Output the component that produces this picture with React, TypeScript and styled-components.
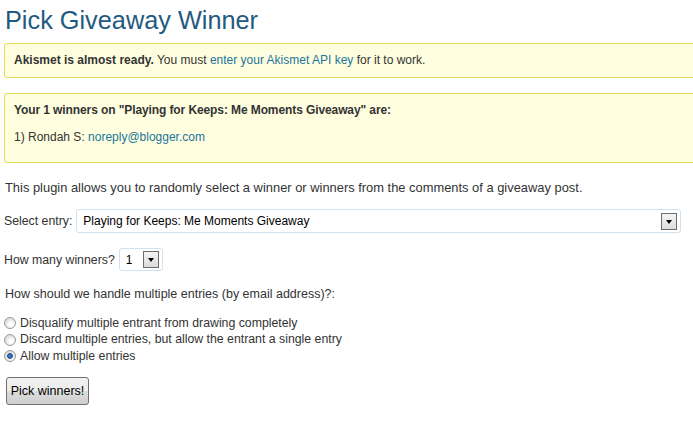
import React, { useState } from "react";
import styled, { createGlobalStyle } from "styled-components";

const GlobalStyle = createGlobalStyle`
  html, body {
    margin: 0;
    padding: 0;
    background: #fff;
  }
  body {
    font-family: "Liberation Sans", Arial, sans-serif;
    font-size: 12px;
    color: #333;
  }
`;

const methods = [
  "Disqualify multiple entrant from drawing completely",
  "Discard multiple entries, but allow the entrant a single entry",
  "Allow multiple entries",
];

const App: React.FC = () => {
  const [method, setMethod] = useState(2);

  return (
    <>
      <GlobalStyle />
      <Page>
        <Title>Pick Giveaway Winner</Title>
        <Notice>
          <NoticeLine>
            <strong>Akismet is almost ready.</strong> You must{" "}
            <Link href="#">enter your Akismet API key</Link> for it to work.
          </NoticeLine>
        </Notice>
        <Notice>
          <NoticeLine>
            <Heading>
              Your 1 winners on "Playing for Keeps: Me Moments Giveaway" are:
            </Heading>
          </NoticeLine>
          <NoticeLine>
            1) Rondah S: <Link href="#">noreply@blogger.com</Link>
          </NoticeLine>
        </Notice>
        <Intro>
          This plugin allows you to randomly select a winner or winners from
          the comments of a giveaway post.
        </Intro>
        <Field>
          Select entry:
          <Select $width={605}>
            <SelectText>Playing for Keeps: Me Moments Giveaway</SelectText>
            <Arrow />
          </Select>
        </Field>
        <Field>
          How many winners?
          <Select $width={44}>
            <SelectText>1</SelectText>
            <Arrow />
          </Select>
        </Field>
        <Question>
          How should we handle multiple entries (by email address)?:
        </Question>
        <Radios>
          {methods.map((label, index) => (
            <RadioLabel key={index}>
              <Radio
                type="radio"
                name="method"
                checked={method === index}
                onChange={() => setMethod(index)}
              />
              {label}
            </RadioLabel>
          ))}
        </Radios>
        <Button>Pick winners!</Button>
      </Page>
    </>
  );
};

export default App;

const Page = styled.div`
  padding: 0 0 0 5px;
  overflow: hidden;
`;

const Title = styled.h2`
  margin: 0;
  padding: 6px 0 0 0;
  font-size: 25.3px;
  font-weight: normal;
  line-height: 28px;
  color: #1f5a80;
`;

const Notice = styled.div`
  margin: 9px -20px 0 -1px;
  padding: 9px 9px 9px;
  border: 1px solid #e6db55;
  border-radius: 3px;
  background: #ffffe0;
  line-height: 15px;
  display: flex;
  flex-direction: column;
  gap: 12px;
  & + & {
    margin-top: 15px;
    padding-bottom: 17px;
  }
`;

const NoticeLine = styled.div``;

const Heading = styled.strong`
  letter-spacing: -0.1px;
`;

const Link = styled.a`
  color: #21759b;
  text-decoration: none;
`;

const Intro = styled.p`
  margin: 17px 0 0;
  font-size: 12.9px;
  line-height: 15px;
`;

const Field = styled.div`
  display: flex;
  align-items: center;
  gap: 4px;
  margin-top: 14px;
  margin-left: -1px;
  font-size: 12.3px;
  & + & {
    margin-top: 15px;
  }
`;

const Select = styled.div<{ $width: number }>`
  display: flex;
  align-items: center;
  justify-content: space-between;
  box-sizing: border-box;
  width: ${({ $width }) => $width}px;
  height: ${({ $width }) => ($width > 100 ? "24px" : "23px")};
  padding: 0 3px 0 6px;
  border: 1px solid #d1e0ea;
  border-radius: 3px;
  background: #fff;
  color: #000;
`;

const SelectText = styled.span`
  font-size: 12px;
`;

const Arrow = styled.span`
  position: relative;
  box-sizing: border-box;
  width: 16px;
  height: 17px;
  border: 1px solid #6d6d6d;
  background: linear-gradient(#f4f4f4, #dcdcdc);
  &::after {
    content: "";
    position: absolute;
    left: 4px;
    top: 6px;
    border-left: 3px solid transparent;
    border-right: 3px solid transparent;
    border-top: 4px solid #000;
  }
`;

const Question = styled.p`
  margin: 16px 0 0;
  font-size: 12.5px;
  line-height: 15px;
`;

const Radios = styled.div`
  display: flex;
  flex-direction: column;
  margin-top: 13px;
  margin-left: -2px;
`;

const RadioLabel = styled.label`
  display: flex;
  align-items: center;
  gap: 4px;
  height: 16.5px;
  font-size: 12.3px;
  line-height: 15px;
`;

const Radio = styled.input`
  appearance: none;
  box-sizing: border-box;
  width: 12px;
  height: 12px;
  margin: 0 0 0 1px;
  border: 1px solid #9a9a9a;
  border-radius: 50%;
  background: radial-gradient(circle at 60% 65%, #ffffff 20%, #d6d6d6 80%);
  &:checked {
    background: radial-gradient(
        circle at 50% 50%,
        #4a93dc 0,
        #1c4f8f 2.5px,
        transparent 3.2px
      ),
      radial-gradient(circle at 60% 65%, #ffffff 20%, #d6d6d6 80%);
  }
`;

const Button = styled.button`
  display: block;
  margin: 12px 0 0 1px;
  width: 83px;
  height: 28px;
  padding: 0;
  border: 1px solid #707070;
  border-radius: 3px;
  background: linear-gradient(#f2f2f2 0, #ebebeb 50%, #dddddd 51%, #cfcfcf 100%);
  font-family: "Liberation Sans", Arial, sans-serif;
  font-size: 12.5px;
  color: #000;
`;
